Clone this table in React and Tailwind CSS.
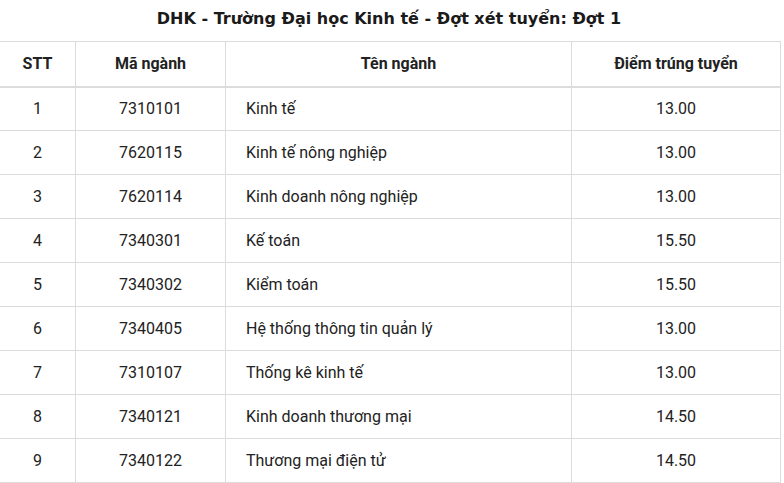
import React from "react";

const rows = [
  ["1", "7310101", "Kinh tế", "13.00"],
  ["2", "7620115", "Kinh tế nông nghiệp", "13.00"],
  ["3", "7620114", "Kinh doanh nông nghiệp", "13.00"],
  ["4", "7340301", "Kế toán", "15.50"],
  ["5", "7340302", "Kiểm toán", "15.50"],
  ["6", "7340405", "Hệ thống thông tin quản lý", "13.00"],
  ["7", "7310107", "Thống kê kinh tế", "13.00"],
  ["8", "7340121", "Kinh doanh thương mại", "14.50"],
  ["9", "7340122", "Thương mại điện tử", "14.50"],
];

export default function App() {
  return (
    <div className="w-[784px] h-[483px] bg-white overflow-hidden text-[#222]" style={{ fontFamily: "Roboto, sans-serif" }}>
      <div className="h-[41px] flex items-center justify-center pb-[4px] pr-[6px]">
        <h1 className="text-[16px] font-bold text-[#1a1a1a]" style={{ fontFamily: "'DejaVu Sans', sans-serif" }}>
          DHK - Trường Đại học Kinh tế - Đợt xét tuyển: Đợt 1
        </h1>
      </div>
      <table className="w-[781px] -ml-px border-collapse table-fixed text-[16px]">
        <colgroup>
          <col className="w-[76px]" />
          <col className="w-[150px]" />
          <col className="w-[346px]" />
          <col className="w-[209px]" />
        </colgroup>
        <thead>
          <tr className="h-[45px] border-b-2 border-[#dcdcdc]">
            <th className="border border-[#dcdcdc] font-bold text-center">STT</th>
            <th className="border border-[#dcdcdc] font-bold text-center">Mã ngành</th>
            <th className="border border-[#dcdcdc] font-bold text-center">Tên ngành</th>
            <th className="border border-[#dcdcdc] font-bold text-center">Điểm trúng tuyển</th>
          </tr>
        </thead>
        <tbody>
          {rows.map((r) => (
            <tr key={r[0]} className="h-[44px]">
              <td className="border border-[#dcdcdc] text-center">{r[0]}</td>
              <td className="border border-[#dcdcdc] text-center">{r[1]}</td>
              <td className="border border-[#dcdcdc] pl-[20px]">{r[2]}</td>
              <td className="border border-[#dcdcdc] text-center">{r[3]}</td>
            </tr>
          ))}
        </tbody>
      </table>
    </div>
  );
}
